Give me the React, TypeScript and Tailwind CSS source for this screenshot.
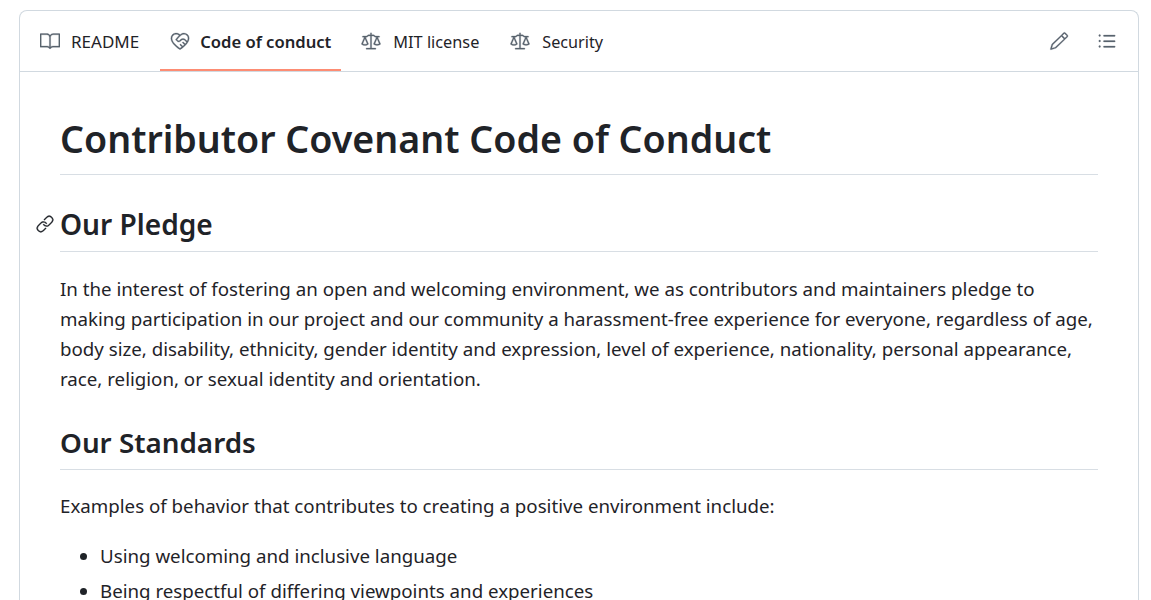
import { GoBook, GoCodeOfConduct, GoLaw, GoLink, GoListUnordered, GoPencil } from 'react-icons/go'

const font = { fontFamily: '"Noto Sans", sans-serif' }
const tabIcon = 'mb-[2px] size-5 stroke-current stroke-[0.35] text-[#59636e]'

export default function App() {
  return (
    <div className="h-[600px] overflow-hidden bg-white pl-[19px] pr-3 pt-2.5 text-[#1f2328]" style={font}>
      <div className="rounded-t-lg border border-b-0 border-[#d1d9e0]">
        {/* Tabs */}
        <div className="flex h-[61px] items-stretch justify-between border-b border-[#d1d9e0] pl-[10px] pr-[20px]">
          <nav className="flex items-stretch gap-[10px]">
            <a className="flex items-center gap-[11px] pl-2.5 pr-[11px] pt-0.5 text-[17px]">
              <GoBook className={tabIcon} />
              <span>README</span>
            </a>
            <a className="flex items-center gap-[10px] border-b-2 border-[#fd8c73] px-2.5 pt-1 text-[16.6px] font-semibold">
              <GoCodeOfConduct className={tabIcon} />
              <span>Code of conduct</span>
            </a>
            <a className="flex items-center gap-[12px] pl-2.5 pr-[11px] pt-0.5 text-[16.3px]">
              <GoLaw className={tabIcon} />
              <span>MIT license</span>
            </a>
            <a className="flex items-center gap-[12px] px-2.5 pt-0.5 text-[16.2px]">
              <GoLaw className={tabIcon} />
              <span>Security</span>
            </a>
          </nav>
          <div className="flex items-center gap-[27px] text-[#59636e]">
            <GoPencil className="size-5 stroke-current stroke-[0.3]" />
            <GoListUnordered className="size-[22px] stroke-current stroke-[0.3]" />
          </div>
        </div>

        {/* Markdown body */}
        <div className="px-10 pt-[40px] text-[18.72px] leading-[30px]">
          <h1 className="border-b border-[#d8dee4] pb-[8px] text-[37.6px] leading-[54px] font-semibold">
            Contributor Covenant Code of Conduct
          </h1>
          <div className="relative mt-[28px] border-b border-[#d8dee4] pb-[5px]">
            <GoLink className="absolute left-[-24px] top-[12px] size-[18px] stroke-current stroke-[0.4]" />
            <h2 className="text-[28.1px] leading-[43px] font-semibold">Our Pledge</h2>
          </div>
          <p className="mt-[22px]">
            In the interest of fostering an open and welcoming environment, we as contributors and maintainers pledge to
            making participation in our project and our community a harassment-free experience for everyone, regardless
            of age, body size, disability, ethnicity, gender identity and expression, level of experience, nationality,
            personal appearance, race, religion, or sexual identity and orientation.
          </p>
          <h2 className="mt-[27px] border-b border-[#d8dee4] pb-[5px] text-[27.8px] leading-[43px] font-semibold">
            Our Standards
          </h2>
          <p className="mt-[21px]">Examples of behavior that contributes to creating a positive environment include:</p>
          <ul className="mt-5 list-disc pl-10">
            <li>Using welcoming and inclusive language</li>
            <li className="mt-[5px]">Being respectful of differing viewpoints and experiences</li>
          </ul>
        </div>
      </div>
    </div>
  )
}
